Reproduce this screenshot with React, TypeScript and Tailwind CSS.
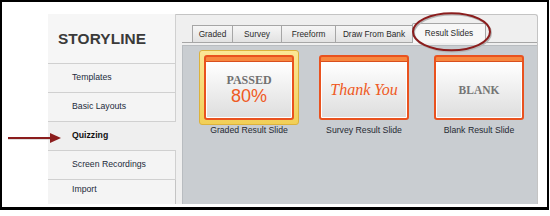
import React from 'react';

const navItems = ['Templates', 'Basic Layouts', 'Quizzing', 'Screen Recordings', 'Import'];

const tabs = [
  { label: 'Graded', w: 'w-[40px]' },
  { label: 'Survey', w: 'w-[49px]' },
  { label: 'Freeform', w: 'w-[54px]' },
  { label: 'Draw From Bank', w: 'w-[77px]' },
];

function SlideFrame({ children }: { children: React.ReactNode }) {
  return (
    <div className="w-[90px] h-[65px] border-2 border-[#e9521f] rounded-[3px] bg-[#e9521f] flex flex-col overflow-hidden">
      <div className="h-[5px] bg-[#f7873f] border-b border-[#d9501f]" />
      <div className="flex-1 border border-white bg-gradient-to-b from-white to-[#dedede] flex flex-col items-center justify-center">
        {children}
      </div>
    </div>
  );
}

function SlideItem({ label, selected, children }: { label: string; selected?: boolean; children: React.ReactNode }) {
  return (
    <div className="w-[100px] flex flex-col items-center">
      <div
        className={
          selected
            ? 'w-[100px] h-[75px] p-[4px] rounded-[3px] border border-[#dcb23c] bg-gradient-to-b from-[#fbe796] to-[#f1cf57]'
            : 'w-[100px] h-[75px] p-[4px] border border-transparent'
        }
      >
        <SlideFrame>{children}</SlideFrame>
      </div>
      <div className="text-[8.7px] leading-[11px] text-[#262a33] whitespace-nowrap">{label}</div>
    </div>
  );
}

export default function App() {
  return (
    <div className="relative w-[550px] h-[216px] bg-white font-['Liberation_Sans',Arial,sans-serif]">
      <div className="w-[549px] h-[210px] border-2 border-b-[3px] border-black pl-[46px] pt-[12px]">
        <div className="flex w-[490px] h-[190px] overflow-hidden">
          {/* Left navigation */}
          <div className="w-[128px] flex flex-col bg-[#f4f4f4]">
            <div className="h-[50px] flex items-center pl-[10px] border-b border-r border-[#d0d0d0] bg-[#f6f6f6]">
              <span className="text-[15.4px] font-bold text-[#3a3a3a] tracking-[0.1px]">STORYLINE</span>
            </div>
            {navItems.map((item, i) => {
              const active = item === 'Quizzing';
              const last = i === navItems.length - 1;
              return (
                <div
                  key={item}
                  className={[
                    'flex items-center pl-[24px] text-[8.7px]',
                    last ? 'flex-1 pb-[4px]' : 'h-[29px] border-b border-[#d0d0d0]',
                    active ? 'bg-[#efefef] font-bold text-[#111]' : 'border-r border-[#c4c4c4] text-[#232b3b]',
                  ].join(' ')}
                >
                  {item}
                </div>
              );
            })}
          </div>

          {/* Tab panel */}
          <div className="flex-1 flex flex-col border-t border-r border-[#c4c4c4] rounded-tr-[3px] bg-[#efefef]">
            <div className="mt-[8px] ml-[6px] pl-[10px] h-[20px] flex items-end border-b border-[#a6a6a6]">
              {tabs.map((t) => (
                <div
                  key={t.label}
                  className={`${t.w} h-[17px] flex items-center justify-center border-t border-l border-[#a6a6a6] bg-gradient-to-b from-[#f6f6f6] to-[#e2e2e2] text-[8.3px] text-[#2a2a2a] whitespace-nowrap`}
                >
                  {t.label}
                </div>
              ))}
              <div className="w-[74px] h-[20px] -mb-px flex items-center justify-center border-t border-l border-r border-[#a6a6a6] rounded-t-[2px] bg-[#f7f7f7] text-[8.3px] text-[#2a2a2a] whitespace-nowrap">
                Result Slides
              </div>
            </div>

            <div className="flex-1 mt-[2px] ml-[6px] border-l border-t border-[#b8bcc0] bg-[#c9cdd1] pl-[16px] pt-[4px] flex gap-[15px]">
              <SlideItem label="Graded Result Slide" selected>
                <span className="font-['Liberation_Serif',serif] font-bold text-[12px] leading-[12px] text-[#707070]">PASSED</span>
                <span className="text-[18px] leading-[20px] text-[#ef5a24]">80%</span>
              </SlideItem>
              <SlideItem label="Survey Result Slide">
                <span className="font-['Liberation_Serif',serif] italic text-[16px] leading-[18px] text-[#ef5a24]">Thank You</span>
              </SlideItem>
              <SlideItem label="Blank Result Slide">
                <span className="font-['Liberation_Serif',serif] font-bold text-[11.5px] leading-[14px] text-[#757575]">BLANK</span>
              </SlideItem>
            </div>
          </div>
        </div>
      </div>

      {/* Annotation: arrow */}
      <svg className="absolute left-[6px] top-[130px]" width="60" height="16" viewBox="0 0 60 16">
        <line x1="2" y1="8.5" x2="47" y2="8.5" stroke="#bdbdbd" strokeWidth="2" />
        <line x1="2" y1="8" x2="47" y2="8" stroke="#8b1d1d" strokeWidth="2" />
        <polygon points="44,3 55,8 44,13" fill="#8b1d1d" />
      </svg>

      {/* Annotation: ellipse */}
      <svg className="absolute left-[410px] top-[10px]" width="86" height="46" viewBox="0 0 86 46">
        <ellipse cx="42.5" cy="23" rx="38.5" ry="18.5" fill="none" stroke="#b5b5b5" strokeWidth="2" />
        <ellipse cx="41.5" cy="21.7" rx="38.5" ry="18.5" fill="none" stroke="#8b1d1d" strokeWidth="2" />
      </svg>
    </div>
  );
}
